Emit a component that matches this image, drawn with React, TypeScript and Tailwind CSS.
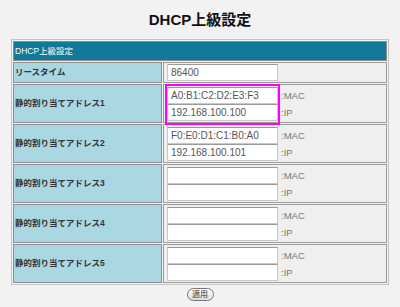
import React from 'react';

const jp = "font-['Liberation_Sans','Noto_Sans_CJK_JP',sans-serif]";

const rows = [
  { label: '静的割り当てアドレス1', mac: 'A0:B1:C2:D2:E3:F3', ip: '192.168.100.100', hl: true },
  { label: '静的割り当てアドレス2', mac: 'F0:E0:D1:C1:B0:A0', ip: '192.168.100.101' },
  { label: '静的割り当てアドレス3', mac: '', ip: '' },
  { label: '静的割り当てアドレス4', mac: '', ip: '' },
  { label: '静的割り当てアドレス5', mac: '', ip: '' },
];

const Field = ({ value }: { value: string }) => (
  <div className="h-[17px] w-[111px] border border-[#c8c8c8] border-t-[#9a9a9a] bg-white pl-[3px] text-[10px] leading-[15px] text-[#555]">
    {value}
  </div>
);

export default function App() {
  return (
    <div className={`min-h-[307px] w-[400px] bg-[#f2f2f2] ${jp}`}>
      <h1 className="pt-[10px] text-center text-[15px] font-bold leading-[19px] text-[#111]">DHCP上級設定</h1>

      <table className="ml-[11px] mt-[10px] w-[378px] border-separate border-spacing-[1px] border border-[#c4c4c4] bg-[#f4f4f4]">
        <tbody>
          <tr>
            <td colSpan={2} className="h-[20px] border border-[#8d8d8d] bg-[#107a98] pl-[1px] text-[8.5px] text-white">
              DHCP上級設定
            </td>
          </tr>
          <tr>
            <td className="h-[21px] w-[149px] border border-[#8d8d8d] bg-[#a9d7e2] pl-[1px] text-[8.5px] font-bold text-[#333]">
              リースタイム
            </td>
            <td className="border border-[#9a9a9a] bg-[#efefef] pl-[3px]">
              <Field value="86400" />
            </td>
          </tr>
          {rows.map((r) => (
            <tr key={r.label}>
              <td className="h-[39px] border border-[#8d8d8d] bg-[#a9d7e2] pl-[1px] text-[8.5px] font-bold text-[#333]">
                {r.label}
              </td>
              <td className="border border-[#9a9a9a] bg-[#efefef] pl-[3px]">
                <div className="flex items-center">
                  <div className="relative flex flex-col">
                    <Field value={r.mac} />
                    <Field value={r.ip} />
                    {r.hl && (
                      <div className="pointer-events-none absolute -inset-x-[2px] -top-[3px] -bottom-[4px] border-2 border-[#ff00ff]" />
                    )}
                  </div>
                  <div className="ml-[3px] flex flex-col text-[9.5px] text-[#777]">
                    <span className="leading-[17px]">:MAC</span>
                    <span className="leading-[17px]">:IP</span>
                  </div>
                </div>
              </td>
            </tr>
          ))}
        </tbody>
      </table>

      <div className="mt-[3px] flex justify-center">
        <button className="h-[13px] w-[27px] rounded-full border border-[#777] bg-gradient-to-b from-white to-[#ddd] text-[8px] leading-[11px] text-[#333]">
          適用
        </button>
      </div>
    </div>
  );
}
